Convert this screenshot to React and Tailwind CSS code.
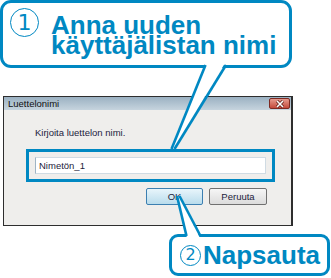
import React from "react";

const BLUE = "#0088c2";

function CloseButton() {
  return (
    <div className="flex h-[11px] w-[21px] items-center justify-center rounded-[2px] border border-[#7d2a22] bg-gradient-to-b from-[#e59a8e] to-[#c4483a]">
      <svg width="10" height="8" viewBox="0 0 10 8">
        <path d="M2 1 L8 7 M8 1 L2 7" stroke="#5a1a14" strokeWidth="3" />
        <path d="M2 1 L8 7 M8 1 L2 7" stroke="#ffffff" strokeWidth="1.6" />
      </svg>
    </div>
  );
}

function Tails() {
  return (
    <svg className="pointer-events-none absolute left-0 top-0" width="331" height="278" viewBox="0 0 331 278">
      <polygon points="206,63 225,63 174,148 172,148" fill="#ffffff" />
      <line x1="205.5" y1="65" x2="171.5" y2="149" stroke={BLUE} strokeWidth="2.6" />
      <line x1="226" y1="65" x2="174.5" y2="149" stroke={BLUE} strokeWidth="2.6" />
      <polygon points="187,238 200,238 180,197 177,197" fill="#ffffff" />
      <line x1="186.5" y1="236" x2="177" y2="196" stroke={BLUE} strokeWidth="2.6" />
      <line x1="200.5" y1="236" x2="179.5" y2="196" stroke={BLUE} strokeWidth="2.6" />
    </svg>
  );
}

export default function App() {
  return (
    <div className="relative h-[278px] w-[331px] overflow-hidden bg-white">
      {/* callout 1 */}
      <div className="flex h-[68px] w-[292px] items-start rounded-[11px] border-[3px] border-[#0088c2] pl-[7px] pt-[5px]">
        <div className="flex h-[29px] w-[29px] items-center justify-center rounded-full border-[1.5px] border-[#0088c2] font-['DejaVu_Sans',sans-serif] text-[22px] leading-none text-[#0088c2]">
          1
        </div>
        <div className="ml-[12px] mt-[7px] font-['Liberation_Sans',Arial,sans-serif] text-[26px] font-bold leading-[20px] text-[#0088c2]">
          <div>Anna uuden</div>
          <div>käyttäjälistan nimi</div>
        </div>
      </div>

      {/* dialog */}
      <div className="ml-[3px] mt-[28px] flex h-[130px] w-[290px] flex-col border border-r-2 border-[#2e2e2e] bg-[#efeeec] font-['Liberation_Sans',Arial,sans-serif] text-[9.5px] text-[#1c1c3c]">
        <div className="flex h-[13px] items-center justify-between bg-gradient-to-b from-[#9bb1c2] to-[#c6d4de] pl-[4px] pr-[1px]">
          <span className="leading-none text-[#101010]">Luettelonimi</span>
          <CloseButton />
        </div>
        <div className="pl-[31px] pt-[17px] leading-[12px]">Kirjoita luettelon nimi.</div>
        <div className="ml-[22px] mt-[10px] h-[33px] w-[249px] border-[3px] border-[#0088c2] pl-[6px] pt-[5px]">
          <div className="flex h-[17px] w-[231px] items-center border border-[#d0dbe3] border-l-[#9fb4c4] bg-white pl-[3px] leading-none">
            Nimetön_1
          </div>
        </div>
        <div className="mt-[6px] flex justify-end gap-[6px] pr-[24px]">
          <div className="flex h-[17px] w-[57px] items-center justify-center rounded-[2px] border border-[#3c7fb1] bg-gradient-to-b from-[#e8f5fb] to-[#b9dcec] leading-none">
            OK
          </div>
          <div className="flex h-[17px] w-[58px] items-center justify-center rounded-[2px] border border-[#707070] bg-gradient-to-b from-[#f6f6f6] to-[#dcdcdc] leading-none">
            Peruuta
          </div>
        </div>
      </div>

      {/* callout 2 */}
      <div className="ml-[169px] mt-[8px] flex h-[42px] w-[161px] items-center rounded-[9px] border-[3px] border-[#0088c2] pl-[8px]">
        <div className="flex h-[21px] w-[21px] items-center justify-center rounded-full border-[1.5px] border-[#0088c2] font-['DejaVu_Sans',sans-serif] text-[16px] leading-none text-[#0088c2]">
          2
        </div>
        <span className="ml-[2px] font-['Liberation_Sans',Arial,sans-serif] text-[26px] font-bold leading-none text-[#0088c2]">
          Napsauta
        </span>
      </div>

      <Tails />
    </div>
  );
}
